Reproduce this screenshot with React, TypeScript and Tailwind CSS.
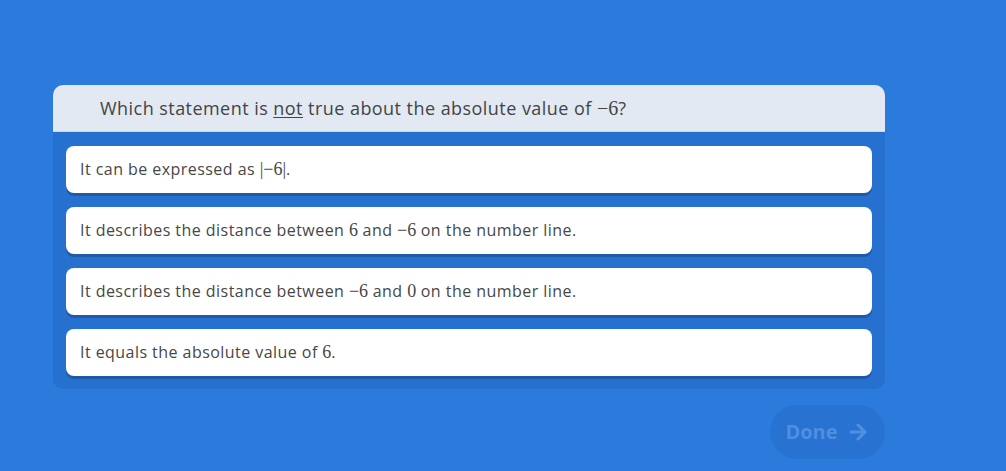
import { ArrowRight } from "lucide-react";

const M = ({ children }: { children: React.ReactNode }) => (
  <span className="font-['Liberation_Serif',serif] text-[18px] tracking-normal">{children}</span>
);

const OPTIONS: React.ReactNode[] = [
  <>It can be expressed as <M>|−6|</M>.</>,
  <>It describes the distance between <M>6</M> and <M>−6</M> on the number line.</>,
  <>It describes the distance between <M>−6</M> and <M>0</M> on the number line.</>,
  <>It equals the absolute value of <M>6</M>.</>,
];

export default function App() {
  return (
    <div className="flex h-[471px] w-[1006px] flex-col bg-[#2a7bdb] pl-[53px] pt-[85px] font-['Open_Sans',sans-serif] text-[#474747]">
      <div className="w-[832px] rounded-[10px] bg-[#2670cf] pb-[13px]">
        <div className="flex h-[47px] items-center rounded-t-[10px] border-b border-[#cfd9e8] bg-[#e2e9f3] pl-[47px] text-[18px] tracking-[0.45px] text-[#444]">
          <span>
            Which statement is <span className="underline underline-offset-2">not</span> true about the absolute value of{" "}
            <span className="font-['Liberation_Serif',serif] text-[20px] tracking-normal">−6</span>?
          </span>
        </div>
        <div className="flex flex-col gap-[14px] px-[13px] pt-[14px]">
          {OPTIONS.map((o, i) => (
            <div
              key={i}
              className="flex h-[47px] items-center rounded-[8px] bg-white pl-[14px] text-[16px] tracking-[0.45px] shadow-[0_3px_0_#1f5aa6]"
            >
              <span>{o}</span>
            </div>
          ))}
        </div>
      </div>
      <div className="flex w-[832px] justify-end pt-[16px]">
        <button className="flex h-[54px] w-[115px] items-center justify-center gap-2 rounded-full bg-[#2872d2] font-['Open_Sans',sans-serif] text-[20px] font-bold text-[#4f8fe0]">
          Done <ArrowRight className="h-6 w-6" strokeWidth={3} />
        </button>
      </div>
    </div>
  );
}
